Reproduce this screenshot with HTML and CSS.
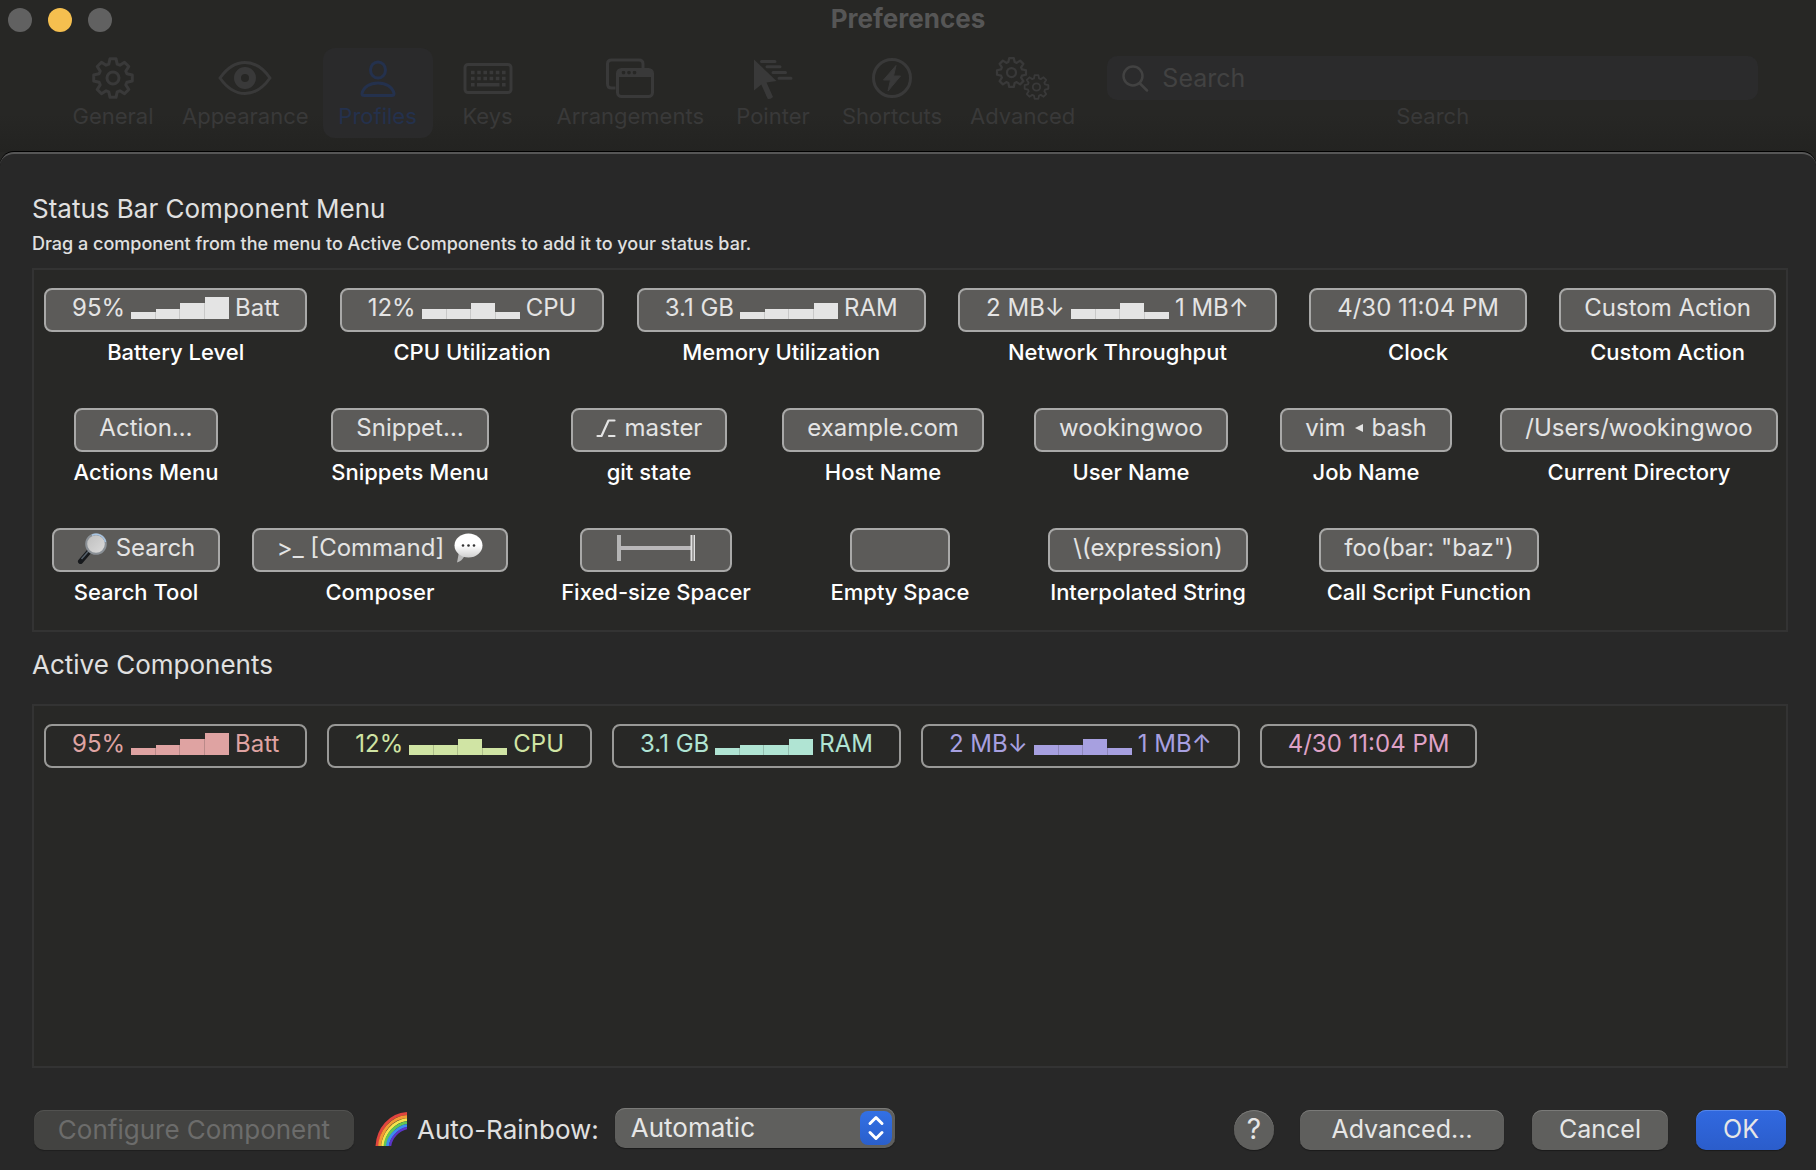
FILE: index.html
```html
<!DOCTYPE html>
<html lang="en">
<head>
<meta charset="utf-8">
<title>Preferences</title>
<link rel="stylesheet" href="styles.css">
</head>
<body>
<svg class="defs" aria-hidden="true">
  <symbol id="gear" viewBox="-22 -22 44 44">
    <path fill="none" stroke="currentColor" stroke-width="3" stroke-linejoin="round" d="M-4.2-13.9L-3-19.3H3L4.2-13.9L6.9-12.8L11.5-15.8L15.8-11.5L12.8-6.9L13.9-4.2L19.3-3V3L13.9 4.2L12.8 6.9L15.8 11.5L11.5 15.8L6.9 12.8L4.2 13.9L3 19.3H-3L-4.2 13.9L-6.9 12.8L-11.5 15.8L-15.8 11.5L-12.8 6.9L-13.9 4.2L-19.3 3V-3L-13.9-4.2L-12.8-6.9L-15.8-11.5L-11.5-15.8L-6.9-12.8Z"/>
    <circle r="6" fill="none" stroke="currentColor" stroke-width="3"/>
  </symbol>
  <symbol id="bars-rise" viewBox="0 0 98 22">
    <path fill="currentColor" d="M0 15H24V22H0ZM25 12H48V22H25ZM49 6H73V22H49ZM74 0H98V22H74Z"/>
    <path fill="currentColor" opacity=".8" d="M24 15h1v7h-1zM48 12h1v10h-1zM73 6h1v16h-1z"/>
  </symbol>
  <symbol id="bars-peak" viewBox="0 0 98 22">
    <path fill="currentColor" d="M0 12H24V22H0ZM25 12H48V22H25ZM49 6H73V22H49ZM74 15H98V22H74Z"/>
    <path fill="currentColor" opacity=".8" d="M24 12h1v10h-1zM48 12h1v10h-1zM73 15h1v7h-1z"/>
  </symbol>
  <symbol id="bars-step" viewBox="0 0 98 22">
    <path fill="currentColor" d="M0 15H24V22H0ZM25 12H48V22H25ZM49 12H73V22H49ZM74 6H98V22H74Z"/>
    <path fill="currentColor" opacity=".8" d="M24 15h1v7h-1zM48 12h1v10h-1zM73 12h1v10h-1z"/>
  </symbol>
</svg>

<header class="window-head">
  <div class="titlebar">
    <div class="lights">
      <button class="light" aria-label="Close"></button>
      <button class="light light-min" aria-label="Minimize"></button>
      <button class="light" aria-label="Zoom"></button>
    </div>
    <h1 class="title">Preferences</h1>
  </div>
  <nav class="toolbar">
    <button class="tool"><svg width="44" height="44"><use href="#gear"/></svg>General</button>
    <button class="tool">
      <svg width="54" height="44" viewBox="0 0 54 44"><path d="M2 22C9 12 18 6.500 27 6.500S45 12 52 22C45 32 36 37.500 27 37.500S9 32 2 22Z" fill="none" stroke="currentColor" stroke-width="3" stroke-linejoin="round"/><circle cx="27" cy="22" r="7.500" fill="none" stroke="currentColor" stroke-width="7"/></svg>Appearance</button>
    <button class="tool tool-on">
      <svg width="36" height="44" viewBox="0 0 36 44"><g fill="none" stroke="currentColor" stroke-width="3"><ellipse cx="18" cy="14" rx="7.500" ry="8"/><path d="M4 39.500C2.500 39.500 2 38.500 2 37.500C3.500 31 10 27 18 27S32.500 31 34 37.500C34 38.500 33.500 39.500 32 39.500Z" stroke-linejoin="round"/></g></svg>Profiles</button>
    <button class="tool">
      <svg width="50" height="44" viewBox="0 0 50 44"><rect x="2" y="8.500" width="46" height="28" rx="3" fill="none" stroke="currentColor" stroke-width="3"/><path d="M8 16.500H43M8 22.500H43" stroke="currentColor" stroke-width="3.600" stroke-dasharray="3.600 2.600"/><path d="M8 28.800h3.600M14 28.800H36.500M39 28.800h3.600" stroke="currentColor" stroke-width="3.600"/></svg>Keys</button>
    <button class="tool">
      <svg width="50" height="44" viewBox="0 0 50 44"><path d="M10.500 32H6.500Q2.500 32 2.500 28V8Q2.500 4 6.500 4H34Q38 4 38 8V12" fill="none" stroke="currentColor" stroke-width="3"/><rect x="12.500" y="13.500" width="35" height="27" rx="4" fill="none" stroke="currentColor" stroke-width="3"/><path fill="currentColor" fill-rule="evenodd" d="M12 21V16Q12 13 15 13H45Q48 13 48 16V21ZM18.500 14.700a1.800 1.800 0 1 0 .01 0ZM24 14.700a1.800 1.800 0 1 0 .01 0ZM29.500 14.700a1.800 1.800 0 1 0 .01 0Z"/></svg>Arrangements</button>
    <button class="tool">
      <svg width="40" height="44" viewBox="0 0 40 44"><path d="M1 3.500V34.500L8.300 28.500L14.500 42.500Q17 44 20 41L13.500 26.500L23.500 25Z" fill="currentColor"/><path d="M8.500 5.500H22M14 10.800H27M20 16.400H32.500M26 22.200H38" stroke="currentColor" stroke-width="3" stroke-linecap="round"/></svg>Pointer</button>
    <button class="tool">
      <svg width="42" height="44" viewBox="0 0 42 44"><circle cx="21" cy="22" r="18.500" fill="none" stroke="currentColor" stroke-width="3"/><path d="M25 9.500L12.500 24H19.500L17 35L29.500 20H22.500Z" fill="currentColor" stroke="currentColor" stroke-linejoin="round"/></svg>Shortcuts</button>
    <button class="tool">
      <svg width="56" height="44" viewBox="0 0 56 44"><use href="#gear" x="0" y="0" width="33" height="33"/><use href="#gear" x="28" y="17" width="27" height="28"/></svg>Advanced</button>
    <div class="search">
      <div class="search-field">
        <svg width="28" height="28" viewBox="0 0 28 28" fill="none" stroke="currentColor" stroke-width="2.500" stroke-linecap="round"><circle cx="12" cy="12" r="9.500"/><path d="M18.500 19L26 26.500"/></svg>
        <input id="search" type="text" placeholder="Search">
      </div>
      <label for="search">Search</label>
    </div>
  </nav>
</header>

<main class="sheet">
  <h2 class="heading">Status Bar Component Menu</h2>
  <p class="hint">Drag a component from the menu to Active Components to add it to your status bar.</p>

  <section class="well">
    <div class="row row-one">
      <div class="item"><button class="chip">95%<svg class="bars"><use href="#bars-rise"/></svg>Batt</button>Battery Level</div>
      <div class="item"><button class="chip">12%<svg class="bars"><use href="#bars-peak"/></svg>CPU</button>CPU Utilization</div>
      <div class="item"><button class="chip">3.1 GB<svg class="bars"><use href="#bars-step"/></svg>RAM</button>Memory Utilization</div>
      <div class="item"><button class="chip">2 MB↓<svg class="bars"><use href="#bars-peak"/></svg>1 MB↑</button>Network Throughput</div>
      <div class="item"><button class="chip">4/30 11:04 PM</button>Clock</div>
      <div class="item"><button class="chip chip-text">Custom Action</button>Custom Action</div>
    </div>
    <div class="row row-two">
      <div class="item"><button class="chip chip-text">Action…</button>Actions Menu</div>
      <div class="item"><button class="chip chip-text">Snippet…</button>Snippets Menu</div>
      <div class="item"><button class="chip chip-text"><svg width="20" height="20" viewBox="0 0 20 20" fill="none" stroke="currentColor" stroke-width="2.200" stroke-linecap="round" stroke-linejoin="round"><path d="M1.500 18H5.500L12.500 2.500H18.500M13 18H18.500"/></svg>master</button>git state</div>
      <div class="item"><button class="chip chip-text">example.com</button>Host Name</div>
      <div class="item"><button class="chip chip-text">wookingwoo</button>User Name</div>
      <div class="item"><button class="chip chip-text">vim<svg width="8" height="10" viewBox="0 0 8 10"><path d="M0 5L8 1V9Z" fill="currentColor"/></svg>bash</button>Job Name</div>
      <div class="item"><button class="chip chip-text">/Users/wookingwoo</button>Current Directory</div>
    </div>
    <div class="row row-three">
      <div class="item"><button class="chip chip-text"><svg width="30" height="32" viewBox="0 0 30 32">
        <defs><linearGradient id="lens" x2="1" y2="1"><stop stop-color="#bdbdbd"/><stop offset="1" stop-color="#dcdcdc"/></linearGradient></defs>
        <path d="M12.500 19L3.500 29.500" stroke="#17191c" stroke-width="5" stroke-linecap="round"/><path d="M12.500 18L4.500 27" stroke="#56616b" stroke-width="1.500"/><circle cx="19" cy="12" r="9.800" fill="url(#lens)" stroke="#8a9096" stroke-width="2"/><path d="M15 3.200A9.800 9.800 0 0 1 28.500 10" fill="none" stroke="#a9c6e4" stroke-width="1.500"/></svg>Search</button>Search Tool</div>
      <div class="item"><button class="chip chip-text">&gt;_ [Command]<svg width="30" height="32" viewBox="0 0 30 32">
        <defs><linearGradient id="bubble" x2="0" y2="1"><stop offset=".5" stop-color="#fff"/><stop offset="1" stop-color="#cfcfcf"/></linearGradient></defs>
        <path d="M6 20L4 30.500Q9 29 11.500 24Z" fill="#b9b9b9"/><ellipse cx="15.500" cy="13.500" rx="14" ry="12" fill="url(#bubble)"/><g fill="#333"><circle cx="10" cy="13.500" r="1.300"/><circle cx="15.500" cy="13.500" r="1.300"/><circle cx="21" cy="13.500" r="1.300"/></g></svg></button>Composer</div>
      <div class="item"><button class="chip chip-spacer" aria-label="Fixed-size Spacer"><svg width="78" height="26" viewBox="0 0 78 26"><path d="M0 0H4V26H0Z" fill="#b4b4b4"/><path d="M3 11H75V15H3Z" fill="#b9b7b9"/><path d="M73.500 0H75.500V26H73.500ZM76.500 0H78V26H76.500Z" fill="#e0e0e0"/></svg></button>Fixed-size Spacer</div>
      <div class="item"><button class="chip chip-empty" aria-label="Empty Space"></button>Empty Space</div>
      <div class="item"><button class="chip chip-text">\(expression)</button>Interpolated String</div>
      <div class="item"><button class="chip chip-text">foo(bar: "baz")</button>Call Script Function</div>
    </div>
  </section>

  <h2 class="heading heading-active">Active Components</h2>
  <section class="well well-active">
    <button class="chip red">95%<svg class="bars"><use href="#bars-rise"/></svg>Batt</button>
    <button class="chip green">12%<svg class="bars"><use href="#bars-peak"/></svg>CPU</button>
    <button class="chip mint">3.1 GB<svg class="bars"><use href="#bars-step"/></svg>RAM</button>
    <button class="chip violet">2 MB↓<svg class="bars"><use href="#bars-peak"/></svg>1 MB↑</button>
    <button class="chip pink">4/30 11:04 PM</button>
  </section>

  <footer class="footer">
    <button class="btn btn-configure" disabled>Configure Component</button>
    <label class="rainbow-label" for="rainbow">
      <svg width="32" height="34" viewBox="0 0 32 34" fill="none" stroke-width="3"><path stroke="#e0443e" d="M2 34C3 17 15 2.500 32 1.500"/><path stroke="#f39a35" d="M4.500 34C6 19 16 6 32 4.500"/><path stroke="#f8e34c" d="M7.500 34C9 21 18 9.500 32 7.500"/><path stroke="#62c554" d="M10 34C11 23 20 12.500 32 10.500"/><path stroke="#3b8df0" d="M12.500 34C13 25 22 15.500 32 13.500"/><path stroke="#5b36c8" stroke-width="2.500" d="M15 34C16 26 23 18 32 16"/></svg>
      Auto-Rainbow:</label>
    <div class="popup">
      <select id="rainbow"><option>Automatic</option></select>
      <svg class="popup-knob" width="32" height="34" viewBox="0 0 32 34" aria-hidden="true"><path d="M10 12.500L16 6.500L22 12.500M10 21.500L16 27.500L22 21.500" fill="none" stroke="#fff" stroke-width="3" stroke-linecap="round" stroke-linejoin="round"/></svg>
    </div>
    <div class="actions">
      <button class="btn btn-help">?</button>
      <button class="btn btn-advanced">Advanced…</button>
      <button class="btn btn-cancel">Cancel</button>
      <button class="btn btn-ok">OK</button>
    </div>
  </footer>
</main>
</body>
</html>
```
FILE: styles.css
```css
* {
  box-sizing: border-box;
}

body {
  margin: 0;
  min-height: 100vh;
  display: flex;
  flex-direction: column;
  background: #262624;
  color: #e0e0e0;
  font-family: Inter, "Liberation Sans", sans-serif;
}

button,
input,
select {
  margin: 0;
  padding: 0;
  border: 0;
  background: none;
  color: inherit;
  font: inherit;
}

svg {
  flex: none;
}

h1,
h2,
p {
  margin: 0;
}

.defs {
  position: absolute;
  width: 0;
  height: 0;
}

/* Window header */
.window-head {
  padding-bottom: 14px;
  background: linear-gradient(#272725 75%, #232321);
  color: #393939;
}

.titlebar {
  display: grid;
  grid-template-columns: 1fr auto 1fr;
  align-items: center;
  height: 40px;
  padding: 0 8px;
}

.lights {
  display: flex;
  gap: 16px;
}

.light {
  width: 24px;
  height: 24px;
  border-radius: 50%;
  background: #616161;
}

.light-min {
  background: #f5bf4f;
}

.title {
  padding-bottom: 2px;
  color: #565656;
  font-size: 26px;
  font-weight: 700;
  line-height: 36px;
}

.toolbar {
  display: flex;
  padding: 8px 58px 0;
  font-size: 22px;
  font-weight: 400;
  line-height: 28px;
}

.tool {
  display: flex;
  flex-direction: column;
  align-items: center;
  gap: 2px;
  min-width: 110px;
  height: 90px;
  padding: 8px 14px;
  border-radius: 12px;
}

.tool-on {
  background: #2a2a2b;
  color: #24314d;
}

.search {
  flex: 1;
  display: flex;
  flex-direction: column;
  gap: 2px;
  margin-left: 18px;
  padding-top: 8px;
  text-align: center;
}

.search-field {
  display: flex;
  align-items: center;
  gap: 13px;
  height: 44px;
  padding: 0 14px;
  border-radius: 10px;
  background: #2b2b2c;
  color: #424242;
  font-size: 25px;
  font-weight: 400;
}

.search-field input {
  flex: 1;
  min-width: 0;
  outline: 0;
}

.search-field input::placeholder {
  color: #424242;
  opacity: 1;
}

/* Sheet */
.sheet {
  flex: 1;
  padding: 39px 28px 20px 32px;
  border-top: 2px solid #565656;
  border-radius: 14px 14px 0 0;
  background: #282828;
  box-shadow: 0 -1px 0 #000;
}

.heading {
  font-size: 26px;
  font-weight: 400;
  line-height: 32px;
}

.heading-active {
  margin: 17px 0 23px;
}

.hint {
  margin: 7px 0 12px;
  font-size: 18px;
  font-weight: 500;
  line-height: 24px;
}

.well {
  min-height: 364px;
  padding: 18px 10px;
  border: 2px solid #333;
  background: #282826;
}

.row {
  display: grid;
  justify-items: center;
  height: 120px;
}

.row-one {
  display: flex;
  justify-content: space-between;
}

.row-two {
  grid-template-columns:
    minmax(0, 204fr) minmax(0, 324fr) minmax(0, 154fr) minmax(0, 314fr)
    minmax(0, 182fr) minmax(0, 288fr) minmax(0, 258fr) minmax(0, 8fr);
}

.row-three {
  grid-template-columns:
    minmax(0, 184fr) minmax(0, 304fr) minmax(0, 248fr) minmax(0, 240fr)
    minmax(0, 256fr) minmax(0, 306fr) minmax(0, 194fr);
  height: 84px;
}

.item {
  display: flex;
  flex-direction: column;
  align-items: center;
  gap: 6px;
  color: #fff;
  font-size: 22px;
  font-weight: 500;
  line-height: 28px;
  white-space: nowrap;
}

.chip {
  display: flex;
  align-items: center;
  justify-content: center;
  gap: 6px;
  height: 44px;
  padding: 0 26px 4px;
  border: 2px solid #a9a9a8;
  border-radius: 8px;
  background: #5c5b59;
  color: #e4e4e4;
  font-size: 24px;
  font-weight: 400;
  line-height: 34px;
  white-space: nowrap;
}

.chip-text {
  gap: 9px;
  padding: 0 23px 4px;
}

.chip-spacer {
  width: 152px;
}

.chip-empty {
  width: 100px;
}

.bars {
  width: 98px;
  height: 22px;
}

.well-active {
  display: flex;
  align-items: flex-start;
  gap: 20px;
}

.well-active .chip {
  border-color: #999997;
  background: none;
}

.well-active .red { color: #dfa3a2; }
.well-active .green { color: #d0e4a4; }
.well-active .mint { color: #b0e4d3; }
.well-active .violet { color: #a7a0e0; }
.well-active .pink { color: #dfa2c6; }

/* Footer */
.footer {
  display: flex;
  align-items: center;
  margin-top: 42px;
  padding: 0 2px;
  font-size: 26px;
}

.btn {
  height: 40px;
  padding-bottom: 2px;
  border-radius: 10px;
  background: #5f5f5d;
  box-shadow: inset 0 1px 0 #7a7a78, 0 1px 1px #1a1a1a;
  color: #e6e6e6;
}

.btn-configure {
  width: 320px;
  background: #434341;
  box-shadow: inset 0 1px 0 #525250, 0 1px 1px #1e1e1e;
  color: #6c6c6b;
}

.rainbow-label {
  display: flex;
  align-items: center;
  gap: 10px;
  margin: 0 16px 0 21px;
  padding-bottom: 2px;
}

.popup {
  position: relative;
  width: 280px;
  margin-top: -4px;
}

.popup select {
  display: block;
  width: 100%;
  height: 40px;
  padding: 0 44px 2px 16px;
  border-radius: 10px;
  background: #5f5f5d;
  box-shadow: inset 0 1px 0 #7a7a78, 0 1px 1px #1a1a1a;
  color: #e6e6e6;
  appearance: none;
}

.popup-knob {
  position: absolute;
  top: 3px;
  right: 3px;
  border-radius: 8px;
  background: linear-gradient(#3370e4, #2a5fcc);
  pointer-events: none;
}

.actions {
  display: flex;
  gap: 28px;
  margin-left: auto;
  font-size: 25px;
}

.btn-help {
  width: 40px;
  margin-right: -2px;
  border-radius: 50%;
  font-size: 28px;
}

.btn-advanced { width: 204px; }
.btn-cancel { width: 136px; }

.btn-ok {
  width: 90px;
  background: linear-gradient(#3169e0, #2b5dcb);
  box-shadow: inset 0 1px 0 #5585e8, 0 1px 1px #1a1a1a;
}
```
